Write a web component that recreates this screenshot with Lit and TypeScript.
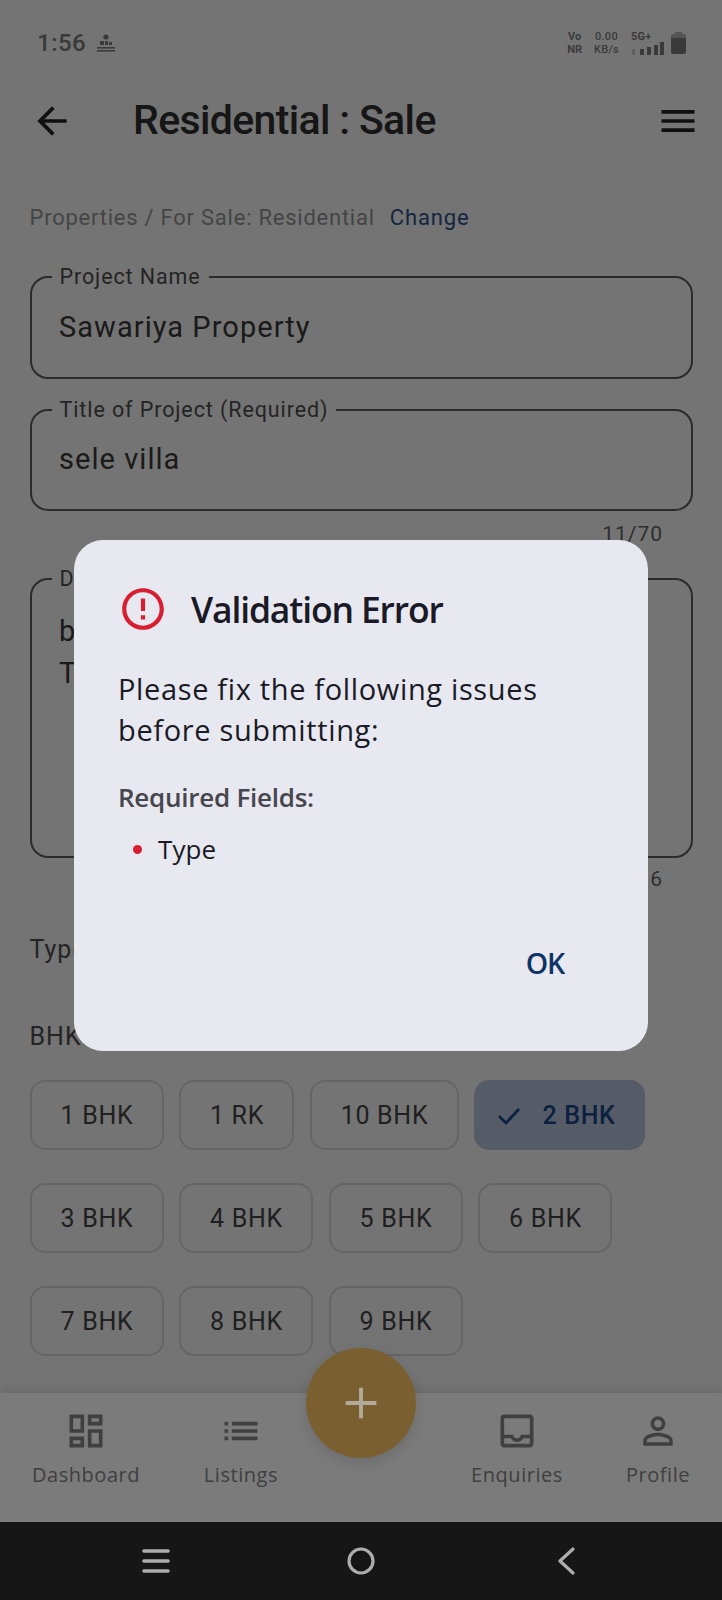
import { LitElement, html, css, svg } from "lit";
import { customElement } from "lit/decorators.js";

const icon = (d: string, size: number, cls = "") =>
  html`<svg class=${cls} width=${size} height=${size} viewBox="0 0 24 24" fill="currentColor">${svg`<path d=${d}></path>`}</svg>`;

const P = {
  back: "M20 11H7.83l5.59-5.59L12 4l-8 8 8 8 1.41-1.41L7.83 13H20v-2z",
  menu: "M3 18h18v-2H3v2zm0-5h18v-2H3v2zm0-7v2h18V6H3z",
  dash: "M19 5v2h-4V5h4M9 5v6H5V5h4m10 8v6h-4v-6h4M9 17v2H5v-2h4M21 3h-8v6h8V3zM11 3H3v10h8V3zm10 8h-8v10h8V11zm-10 4H3v6h8v-6z",
  list: "M3 13h2v-2H3v2zm0 4h2v-2H3v2zm0-8h2V7H3v2zm4 4h14v-2H7v2zm0 4h14v-2H7v2zM7 7v2h14V7H7z",
  inbox: "M19 3H5c-1.1 0-2 .9-2 2v14c0 1.1.9 2 2 2h14c1.1 0 2-.9 2-2V5c0-1.1-.9-2-2-2zm0 16H5v-3h3.56c.69 1.19 1.97 2 3.45 2s2.75-.81 3.44-2H19v3zm0-5h-4.99c0 1.1-.9 2-2 2s-2-.9-2-2H5V5h14v9z",
  person: "M12 5.9c1.16 0 2.1.94 2.1 2.1s-.94 2.1-2.1 2.1S9.9 9.16 9.9 8s.94-2.1 2.1-2.1m0 9c2.97 0 6.1 1.46 6.1 2.1v1.1H5.9V17c0-.64 3.13-2.1 6.1-2.1M12 4C9.79 4 8 5.79 8 8s1.79 4 4 4 4-1.79 4-4-1.79-4-4-4zm0 9c-2.67 0-8 1.34-8 4v3h16v-3c0-2.66-5.33-4-8-4z",
  error: "M11 15h2v2h-2zm0-8h2v6h-2zm.99-5C6.47 2 2 6.48 2 12s4.47 10 9.99 10C17.52 22 22 17.52 22 12S17.52 2 11.99 2zM12 20c-4.42 0-8-3.58-8-8s3.58-8 8-8 8 3.58 8 8-3.58 8-8 8z",
};

const chipRows = [
  [{ t: "1 BHK", c: "w134" }, { t: "1 RK", c: "w115" }, { t: "10 BHK", c: "w149" }, { t: "2 BHK", c: "w171 sel" }],
  [{ t: "3 BHK", c: "w134" }, { t: "4 BHK", c: "w134" }, { t: "5 BHK", c: "w134" }, { t: "6 BHK", c: "w134" }],
  [{ t: "7 BHK", c: "w134" }, { t: "8 BHK", c: "w134" }, { t: "9 BHK", c: "w134" }],
];

@customElement("app-root")
export class AppRoot extends LitElement {
  static styles = css`
    :host { display: block; position: relative; width: 722px; height: 1600px; overflow: hidden; background: #e9e9e9; font-family: Roboto, sans-serif; }
    .page { display: flex; flex-direction: column; height: 1600px; }
    .main { flex: 1; min-height: 0; overflow: hidden; }

    .status { height: 86px; box-sizing: border-box; padding: 0 36px 0 37px; display: flex; align-items: center; color: #747474; }
    .time { font-size: 24px; font-weight: 500; letter-spacing: .5px; }
    .mini { margin-left: 10px; }
    .grow { flex: 1; }
    .stat { display: flex; flex-direction: column; align-items: center; font-size: 11px; line-height: 13px; font-weight: 700; margin-right: 12px; }
    .stat.kb { font-weight: 500; letter-spacing: .3px; }
    .sig { display: flex; flex-direction: column; margin-right: 7px; width: 33px; }
    .sig span { font-size: 11px; line-height: 11px; font-weight: 700; letter-spacing: .2px; }
    .batt { display: block; }

    .head { height: 70px; display: flex; align-items: center; padding: 0 22px 0 30px; color: #202020; }
    .title { margin: -2px 0 0 59px; flex: 1; font-size: 41px; font-weight: 500; letter-spacing: -0.65px; color: #2c2c2c; }

    .crumb { margin: 47px 0 0 29.5px; height: 30px; line-height: 30px; font-size: 22px; letter-spacing: .76px; color: #8a8a8a; display: flex; gap: 15px; }
    .crumb b { font-weight: 400; color: #2a4c80; letter-spacing: .85px; }

    .form { margin: 43px 29px 0 29.5px; }
    .field { position: relative; box-sizing: border-box; border: 2px solid #565656; border-radius: 18px; padding: 0 27.5px; display: flex; align-items: center; font-size: 29px; letter-spacing: 1.05px; color: #343434; }
    .f1 { height: 103px; padding-bottom: 1px; }
    .f2 { height: 102px; margin-top: 30px; padding-bottom: 3px; }
    .f3 { height: 280px; margin-top: 30px; display: block; padding-top: 30px; line-height: 42px; }
    .field label { position: absolute; top: -14px; left: 20px; padding: 0 8px; background: #e9e9e9; font-size: 21.5px; line-height: 26px; letter-spacing: .9px; color: #484848; }
    .count { height: 28px; line-height: 28px; margin-top: 9px; padding-right: 30px; text-align: right; font-size: 21px; letter-spacing: 1px; color: #5c5c5c; }
    .count.c2 { margin-top: 7px; }
    .sect { height: 30px; line-height: 30px; margin-top: 42px; font-size: 25px; letter-spacing: 1px; color: #484848; }
    .sect.s2 { margin-top: 57px; }

    .chips { display: flex; flex-direction: column; gap: 33px; margin-top: 28px; }
    .row { display: flex; gap: 15.5px; }
    .chip { height: 70px; box-sizing: border-box; padding-top: 1px; border: 2px solid #cbcbd0; border-radius: 15px; display: flex; align-items: center; justify-content: center; gap: 21px; font-size: 25px; letter-spacing: .7px; color: #404040; }
    .w134 { width: 134px; padding-left: 1px; } .w115 { width: 115px; padding-left: 1px; } .w149 { width: 149px; padding-left: 1px; } .w171 { width: 171px; padding-right: 6px; }
    .chip.sel { background: #adb8cf; border-color: #adb8cf; color: #174282; font-weight: 500; }

    .nav { height: 129px; flex: none; display: grid; grid-template-columns: 172px 138px 130px 154px 128px; background: #f6f6f6; box-shadow: 0 -2px 12px rgba(0,0,0,.12); position: relative; }
    .tab { display: flex; flex-direction: column; align-items: center; padding-top: 16px; color: #808080; font-family: "Open Sans", sans-serif; font-size: 20px; letter-spacing: .55px; line-height: 30px; }
    .tab svg { display: block; margin-bottom: 7px; }
    .fab { position: absolute; left: 306px; top: 1348px; width: 110px; height: 110px; z-index: 3; border-radius: 50%; background: #7a6030; color: #b3ab99; box-shadow: 0 5px 14px rgba(0,0,0,.12); display: flex; align-items: center; justify-content: center; }

    .sys { height: 78px; flex: none; position: relative; z-index: 3; background: #161616; display: grid; grid-template-columns: 205px 205px 205px; align-items: center; justify-items: center; padding: 0 53.5px; color: #adadad; }

    .scrim { position: absolute; left: 0; top: 0; width: 722px; height: 1522px; background: rgba(0,0,0,.5); z-index: 2; box-sizing: border-box; padding: 540px 74px 0; }
    .dialog { height: 511px; box-sizing: border-box; border-radius: 29px; background: #e8e8f0; padding: 44px 44px 0; position: relative; font-family: "Open Sans", sans-serif; color: #1a1a26; }
    .dhead { display: flex; align-items: center; gap: 23px; height: 50px; color: #d81e30; }
    .dhead svg { flex: none; }
    .dtitle { margin: 0; font-size: 35.5px; font-weight: 600; letter-spacing: -1.15px; color: #1a1a26; }
    .msg { margin: 34px 0 0; font-size: 29px; line-height: 41px; letter-spacing: .65px; font-weight: 400; }
    .req { margin-top: 30px; height: 34px; line-height: 34px; font-size: 26px; font-weight: 600; letter-spacing: -.25px; color: #46464e; }
    .item { margin-top: 18px; height: 34px; display: flex; align-items: center; gap: 16px; padding-left: 15px; font-size: 26px; letter-spacing: .1px; }
    .dot { width: 9px; height: 9px; border-radius: 50%; background: #d81e30; }
    .ok { position: absolute; right: 84px; bottom: 70px; font-size: 28.5px; line-height: 36px; font-weight: 600; color: #0f3566; letter-spacing: -1.2px; }
  `;

  render() {
    return html`
      <div class="page">
        <div class="main">
          <div class="status">
            <span class="time">1:56</span>
            <svg class="mini" width="20" height="20" viewBox="0 0 20 20" fill="currentColor">
              <circle cx="10" cy="4" r="2.6"></circle>
              <rect x="4" y="8" width="4" height="4"></rect><rect x="9" y="8" width="3" height="4"></rect><rect x="13" y="9" width="3" height="3"></rect>
              <rect x="1" y="14" width="18" height="1.6"></rect><rect x="1" y="17" width="18" height="1.6"></rect>
            </svg>
            <span class="grow"></span>
            <span class="stat"><span>Vo</span><span>NR</span></span>
            <span class="stat kb"><span>0.00</span><span>KB/s</span></span>
            <span class="sig">
              <span>5G+</span>
              <svg width="33" height="14" viewBox="0 0 33 14" fill="currentColor">
                <rect x="1" y="7" width="3" height="6" opacity=".35"></rect><rect x="9" y="7" width="4" height="6"></rect><rect x="16" y="5" width="4" height="8"></rect><rect x="23" y="3" width="4" height="10"></rect><rect x="29" y="0" width="4" height="13"></rect>
              </svg>
            </span>
            <svg class="batt" width="15" height="22" viewBox="0 0 15 22" fill="currentColor">
              <path d="M4 0h7v2h2a2 2 0 0 1 2 2v2H0V4a2 2 0 0 1 2-2h2z" opacity=".55"></path>
              <path d="M0 6h15v14a2 2 0 0 1-2 2H2a2 2 0 0 1-2-2z"></path>
            </svg>
          </div>
          <div class="head">
            ${icon(P.back, 44)}
            <h1 class="title">Residential : Sale</h1>
            ${icon(P.menu, 44)}
          </div>
          <div class="crumb"><span>Properties / For Sale: Residential</span><b>Change</b></div>
          <div class="form">
            <div class="field f1"><label>Project Name</label>Sawariya Property</div>
            <div class="field f2"><label>Title of Project (Required)</label>sele villa</div>
            <div class="count">11/70</div>
            <div class="field f3"><label>Description</label>b<br />T</div>
            <div class="count c2">6</div>
            <div class="sect">Type</div>
            <div class="sect s2">BHK</div>
            <div class="chips">
              ${chipRows.map(
                (r) => html`<div class="row">
                  ${r.map(
                    (c) => html`<div class="chip ${c.c}">
                      ${c.c.includes("sel")
                        ? html`<svg width="24" height="20" viewBox="0 0 24 20" fill="none" stroke="currentColor" stroke-width="2.8"><path d="M2 10l7 7L22 3"></path></svg>`
                        : ""}
                      ${c.t}
                    </div>`
                  )}
                </div>`
              )}
            </div>
          </div>
        </div>
        <div class="nav">
          <div class="tab">${icon(P.dash, 44)}Dashboard</div>
          <div class="tab">${icon(P.list, 44)}Listings</div>
          <div></div>
          <div class="tab">${icon(P.inbox, 44)}Enquiries</div>
          <div class="tab">${icon(P.person, 44)}Profile</div>
        </div>
        <div class="sys">
          <svg width="30" height="26" viewBox="0 0 30 26" fill="none" stroke="currentColor" stroke-width="3.6" stroke-linecap="round"><path d="M3 3h24M3 13h24M3 23h24"></path></svg>
          <svg width="30" height="30" viewBox="0 0 30 30" fill="none" stroke="currentColor" stroke-width="3.2"><circle cx="15" cy="15" r="12"></circle></svg>
          <svg width="20" height="28" viewBox="0 0 20 28" fill="none" stroke="currentColor" stroke-width="3.2" stroke-linecap="round" stroke-linejoin="round"><path d="M17 2L4 14l13 12"></path></svg>
        </div>
      </div>
      <div class="fab">${icon("M11 4h2v7h7v2h-7v7h-2v-7H4v-2h7z", 46)}</div>
      <div class="scrim">
        <div class="dialog">
          <div class="dhead">${icon(P.error, 50)}<h2 class="dtitle">Validation Error</h2></div>
          <p class="msg">Please fix the following issues<br />before submitting:</p>
          <div class="req">Required Fields:</div>
          <div class="item"><span class="dot"></span>Type</div>
          <div class="ok">OK</div>
        </div>
      </div>
    `;
  }
}
